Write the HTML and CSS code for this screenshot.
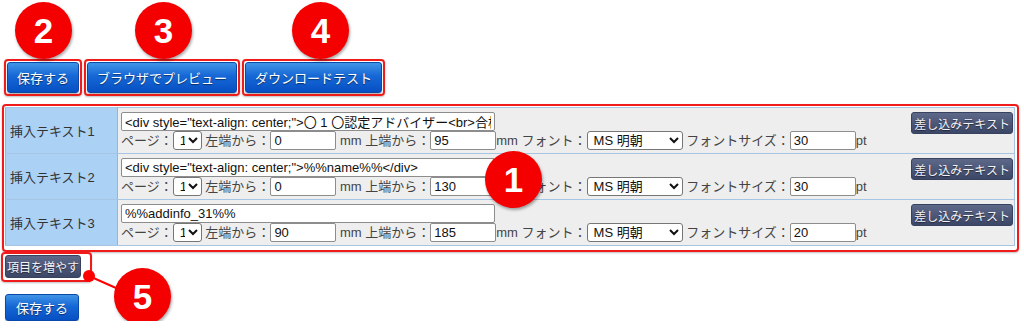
FILE: index.html
```html
<!DOCTYPE html>
<html>
  <head>
    <meta name="viewport" content="width=device-width, initial-scale=1" />
    <link rel="stylesheet" href="styles.css">
  </head>
  <body>
    <div class="page">
      <div class="toolbar">
        <span class="mark"><button class="btn-blue">保存する</button></span>
        <span class="mark"><button class="btn-blue">ブラウザでプレビュー</button></span>
        <span class="mark"><button class="btn-blue">ダウンロードテスト</button></span>
      </div>

      <div class="mark mark-table">
        <table class="items">
          <tr>
            <th>挿入テキスト1</th>
            <td>
              <button class="btn-dark btn-insert">差し込みテキスト</button>
              <input class="text-main" type="text" value='<div style="text-align: center;">〇 1 〇認定アドバイザー<br>合格認定証</div>' />
              <div class="pos">ページ：<select class="page-sel"><option>1</option></select> 左端から：<input class="num" type="text" value="0" /> mm 上端から：<input class="num" type="text" value="95" />mm フォント：<select class="font-sel"><option>MS 明朝</option></select> フォントサイズ：<input class="num" type="text" value="30" />pt</div>
            </td>
          </tr>
          <tr>
            <th>挿入テキスト2</th>
            <td>
              <button class="btn-dark btn-insert">差し込みテキスト</button>
              <input class="text-main" type="text" value='<div style="text-align: center;">%%name%%</div>' />
              <div class="pos">ページ：<select class="page-sel"><option>1</option></select> 左端から：<input class="num" type="text" value="0" /> mm 上端から：<input class="num" type="text" value="130" />mm フォント：<select class="font-sel"><option>MS 明朝</option></select> フォントサイズ：<input class="num" type="text" value="30" />pt</div>
            </td>
          </tr>
          <tr>
            <th>挿入テキスト3</th>
            <td>
              <button class="btn-dark btn-insert">差し込みテキスト</button>
              <input class="text-main" type="text" value="%%addinfo_31%%" />
              <div class="pos">ページ：<select class="page-sel"><option>1</option></select> 左端から：<input class="num" type="text" value="90" /> mm 上端から：<input class="num" type="text" value="185" />mm フォント：<select class="font-sel"><option>MS 明朝</option></select> フォントサイズ：<input class="num" type="text" value="20" />pt</div>
            </td>
          </tr>
        </table>
      </div>

      <div class="mark mark-add"><button class="btn-dark">項目を増やす</button></div>

      <button class="btn-blue btn-save">保存する</button>

      <!-- annotation markers -->
      <svg class="connector" width="50" height="34" viewBox="0 0 50 34">
        <line x1="9" y1="10" x2="45" y2="26" stroke="#f00" stroke-width="2" />
        <circle cx="9" cy="10" r="6" fill="#f00" />
      </svg>
      <div class="badge badge-1">1</div>
      <div class="badge badge-2">2</div>
      <div class="badge badge-3">3</div>
      <div class="badge badge-4">4</div>
      <div class="badge badge-5">5</div>
    </div>
  </body>
</html>
```

FILE: styles.css
```css
body {
  margin: 0;
  font-family: "Liberation Sans", "Noto Sans CJK JP", sans-serif;
  font-size: 13px;
  color: #333;
  background-color: white;
}

* {
  box-sizing: border-box;
}

.page {
  position: relative;
  padding-top: 59px;
}

/* Red highlight boxes */
.mark {
  display: inline-block;
  border: 2px solid #f01c1c;
  border-radius: 4px;
  padding: 1px;
  box-shadow: 0 1px 2px rgba(0, 0, 0, 0.25);
}

.toolbar {
  display: flex;
  gap: 2px;
  margin-left: 4px;
}

/* Blue buttons */
.btn-blue {
  display: block;
  height: 31px;
  padding: 0 9px;
  font-family: "Liberation Sans", "Noto Sans CJK JP", sans-serif;
  font-size: 13px;
  color: white;
  background: linear-gradient(#4094e6, #1667d6 45%, #0650c4);
  border: 1px solid #0a49a8;
  border-radius: 3px;
  text-shadow: 0 1px 1px rgba(0, 0, 0, 0.5);
  box-shadow: 0 1px 1px rgba(0, 0, 0, 0.3);
  cursor: pointer;
}

.btn-save {
  height: 27px;
  padding: 0 10px;
  margin: 12px 0 0 5px;
}

/* Dark slate buttons */
.btn-dark {
  height: 22px;
  padding: 0 2px;
  font-family: "Liberation Sans", "Noto Sans CJK JP", sans-serif;
  font-size: 12px;
  color: #f2f3f8;
  background: linear-gradient(#5e6989, #3c4666);
  border: 1px solid #38425e;
  border-radius: 3px;
  text-shadow: 0 1px 1px rgba(0, 0, 0, 0.5);
  cursor: pointer;
}

.mark-table {
  display: block;
  width: 1017px;
  margin: 8px 0 0 2px;
  padding: 1px 2px 4px 1px;
}

.items {
  width: 1010px;
  border-collapse: collapse;
}

.items th,
.items td {
  border: 1px solid #a6c5e4;
  vertical-align: middle;
}

.items th {
  width: 112px;
  padding: 0 0 0 4px;
  text-align: left;
  font-weight: normal;
  color: #333;
  background-color: #abd1f5;
  border-right-color: #8fb8e0;
  border-left-color: #8fb8e0;
}

.items td {
  height: 46px;
  padding: 4px 1px 3px 3px;
  background-color: #eeeeee;
  vertical-align: top;
}

.btn-insert {
  float: right;
}

input[type='text'] {
  height: 19px;
  padding: 0 3px;
  font-family: "Liberation Sans", "Noto Sans CJK JP", sans-serif;
  font-size: 13px;
  color: #111;
  background: white;
  border: 1px solid #8d8d8d;
  border-radius: 2px;
  vertical-align: top;
}

.text-main {
  display: block;
  width: 374px;
}

.num {
  width: 66px;
}

.pos {
  height: 19px;
  line-height: 19px;
  white-space: nowrap;
  color: #444;
}

select {
  height: 19px;
  padding: 0 0 0 2px;
  font-family: "Liberation Sans", "Noto Sans CJK JP", sans-serif;
  font-size: 13px;
  color: #111;
  background: white;
  border: 1px solid #767676;
  border-radius: 3px;
  vertical-align: top;
}

.page-sel {
  width: 29px;
}

.font-sel {
  width: 96px;
}

.mark-add {
  display: block;
  width: 91px;
  margin: 0 0 0 1px;
  padding: 1px 8px 2px 2px;
}

.mark-add .btn-dark {
  display: block;
  height: 23px;
  padding: 0 1px;
}

/* Numbered circles */
.badge {
  position: absolute;
  width: 57px;
  height: 57px;
  border-radius: 50%;
  background-color: #f40000;
  color: white;
  font-family: "Liberation Sans", sans-serif;
  font-weight: bold;
  font-size: 35px;
  line-height: 57px;
  text-align: center;
  box-shadow: 1px 2px 3px rgba(0, 0, 0, 0.35);
}

.badge-1 { left: 485px; top: 151px; }
.badge-2 { left: 15px; top: 2px; }
.badge-3 { left: 135px; top: 2px; }
.badge-4 { left: 292px; top: 2px; }
.badge-5 { left: 114px; top: 268px; }

.connector {
  position: absolute;
  left: 80px;
  top: 266px;
}
```
